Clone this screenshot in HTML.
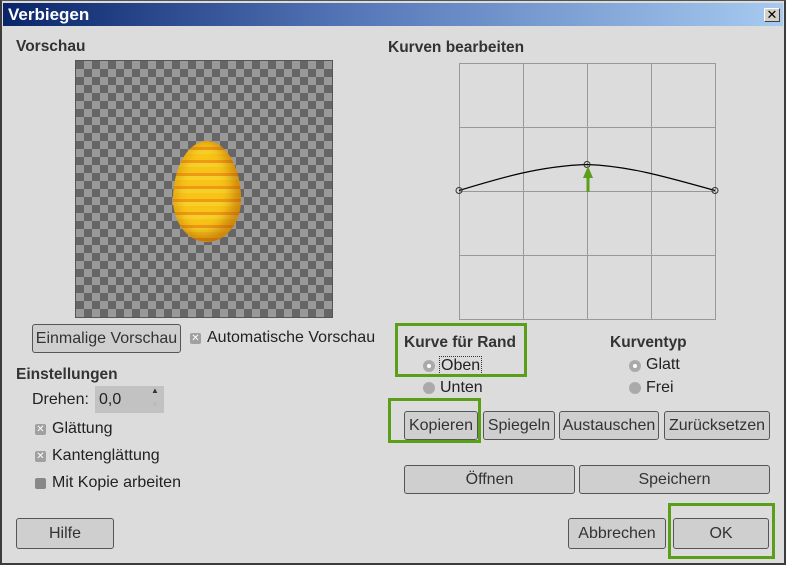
<!DOCTYPE html>
<html><head><meta charset="utf-8"><style>
*{margin:0;padding:0;box-sizing:border-box}
body{width:786px;height:565px;background:#dcdcdc;font-family:"Liberation Sans","DejaVu Sans",sans-serif;font-size:16px;color:#222;position:relative;overflow:hidden}
.a{position:absolute;white-space:nowrap}
.win{position:absolute;left:0;top:0;width:786px;height:565px;border:2px solid #3c3c3c;border-top:1px solid #555}
.title{position:absolute;left:3px;top:3px;width:780px;height:23px;background:linear-gradient(to right,#0a246a,#5577b8 45%,#a6caf0);color:#fff;font-weight:bold;font-size:17px;padding-left:5px;line-height:23px}
.close{position:absolute;left:764px;top:8px;width:16px;height:14px;background:#d4d0c8;border:1px solid;border-color:#fff #404040 #404040 #fff;font-size:13px;line-height:12px;text-align:center;color:#000;font-weight:bold}
.b{font-weight:bold;color:#333;font-size:15.5px}
.btn{position:absolute;border:1px solid #555;border-radius:3px;background:#cfcfcf;text-align:center;color:#333;font-size:16px}
.cb{position:absolute;width:11px;height:11px;background:#a0a0a0;border-radius:2px;color:#fff;font-size:10px;line-height:11px;text-align:center;font-weight:bold}
.rd{position:absolute;width:12px;height:12px;border-radius:6px;background:#aaa}
.rd.on::after{content:"";position:absolute;left:4px;top:4px;width:4px;height:4px;border-radius:2px;background:#fff}
.g{position:absolute;border:3px solid #5b9e1a}
.chk{position:absolute;left:75px;top:60px;width:258px;height:258px;border:1px solid #555;background-color:#666;background-image:linear-gradient(45deg,#999 25%,transparent 25%,transparent 75%,#999 75%),linear-gradient(45deg,#999 25%,transparent 25%,transparent 75%,#999 75%);background-size:16px 16px;background-position:0 0,8px 8px}
.egg{position:absolute;left:97px;top:80px;width:68px;height:101px;border-radius:50% 50% 50% 50%/58% 58% 42% 42%;background:repeating-linear-gradient(180deg,#f8c418 0 6px,#ee9a14 6px 9px,#f6d028 9px 13px);box-shadow:inset -8px -6px 12px rgba(170,80,0,.55),inset 6px 0 8px rgba(200,120,0,.3)}
</style></head><body>
<div class="win"></div>
<div class="title">Verbiegen</div>
<div class="close">✕</div>

<div class="a b" style="left:16px;top:38px">Vorschau</div>
<div class="chk"><div class="egg"></div></div>
<div class="btn" style="left:32px;top:324px;width:149px;height:29px;line-height:27px">Einmalige Vorschau</div>
<div class="cb" style="left:190px;top:333px">✕</div>
<div class="a" style="left:207px;top:329px">Automatische Vorschau</div>

<div class="a b" style="left:16px;top:366px">Einstellungen</div>
<div class="a" style="left:32px;top:391px">Drehen:</div>
<div class="a" style="left:95px;top:386px;width:69px;height:27px;background:#c2c2c2"></div>
<div class="a" style="left:99px;top:391px">0,0</div>
<div class="a" style="left:151px;top:386px;font-size:8px;color:#333">▲</div>
<div class="a" style="left:151px;top:400px;font-size:8px;color:#bbb">▼</div>
<div class="cb" style="left:35px;top:424px">✕</div>
<div class="a" style="left:52px;top:420px">Glättung</div>
<div class="cb" style="left:35px;top:451px">✕</div>
<div class="a" style="left:52px;top:447px">Kantenglättung</div>
<div class="cb" style="left:35px;top:478px;background:#888"></div>
<div class="a" style="left:52px;top:474px">Mit Kopie arbeiten</div>
<div class="btn" style="left:16px;top:518px;width:98px;height:31px;line-height:29px">Hilfe</div>

<div class="a b" style="left:388px;top:39px">Kurven bearbeiten</div>
<svg class="a" style="left:0;top:0" width="786" height="565">
<g stroke="#999" stroke-width="1" fill="none">
<rect x="459.5" y="63.5" width="256" height="256"/>
<line x1="523.5" y1="63" x2="523.5" y2="319"/><line x1="587.5" y1="63" x2="587.5" y2="319"/><line x1="651.5" y1="63" x2="651.5" y2="319"/>
<line x1="459" y1="127.5" x2="715" y2="127.5"/><line x1="459" y1="191.5" x2="715" y2="191.5"/><line x1="459" y1="255.5" x2="715" y2="255.5"/>
</g>
<path d="M459 190.5 C500 178 540 166 587 164.5 C630 166 670 178 715 190.5" stroke="#000" stroke-width="1.2" fill="none"/>
<circle cx="459" cy="190.5" r="3" fill="none" stroke="#333"/><circle cx="715" cy="190.5" r="3" fill="none" stroke="#333"/><circle cx="587" cy="164.5" r="3" fill="none" stroke="#333"/>
<line x1="588" y1="192" x2="588" y2="175" stroke="#5b9e1a" stroke-width="3"/>
<path d="M583 178 L588 166 L593 178 Z" fill="#5b9e1a"/>
</svg>

<div class="a b" style="left:404px;top:334px">Kurve für Rand</div>
<div class="rd on" style="left:423px;top:360px"></div>
<div class="a" style="left:439px;top:356px;border:1px dotted #333;padding:0 1px;line-height:17px">Oben</div>
<div class="rd" style="left:423px;top:382px"></div>
<div class="a" style="left:440px;top:379px">Unten</div>
<div class="a b" style="left:610px;top:334px">Kurventyp</div>
<div class="rd on" style="left:629px;top:360px"></div>
<div class="a" style="left:646px;top:356px">Glatt</div>
<div class="rd" style="left:629px;top:382px"></div>
<div class="a" style="left:646px;top:379px">Frei</div>

<div class="g" style="left:395px;top:323px;width:132px;height:54px"></div>
<div class="g" style="left:388px;top:398px;width:93px;height:45px"></div>
<div class="btn" style="left:404px;top:411px;width:74px;height:29px;line-height:27px">Kopieren</div>
<div class="btn" style="left:483px;top:411px;width:72px;height:29px;line-height:27px">Spiegeln</div>
<div class="btn" style="left:559px;top:411px;width:100px;height:29px;line-height:27px">Austauschen</div>
<div class="btn" style="left:664px;top:411px;width:106px;height:29px;line-height:27px">Zurücksetzen</div>
<div class="btn" style="left:404px;top:465px;width:171px;height:29px;line-height:27px">Öffnen</div>
<div class="btn" style="left:579px;top:465px;width:191px;height:29px;line-height:27px">Speichern</div>
<div class="btn" style="left:568px;top:518px;width:98px;height:31px;line-height:29px">Abbrechen</div>
<div class="g" style="left:668px;top:503px;width:107px;height:56px"></div>
<div class="btn" style="left:673px;top:518px;width:96px;height:31px;line-height:29px">OK</div>
</body></html>
